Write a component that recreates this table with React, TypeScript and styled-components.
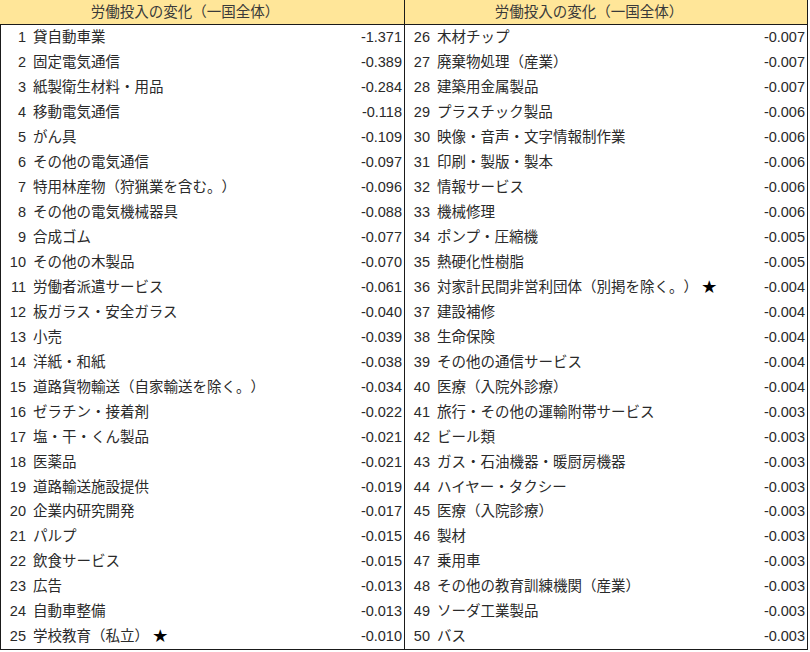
import React from "react";
import styled, { createGlobalStyle } from "styled-components";

const GlobalStyle = createGlobalStyle`
  html, body { margin: 0; padding: 0; background: #ffffff; }
  body {
    font-family: "Liberation Sans", "Noto Sans CJK JP", sans-serif;
    color: #2a2a2a;
    text-spacing-trim: space-all;
  }
`;

type Item = { no: number; name: string; star?: boolean; value: string };

const left: Item[] = [
  { no: 1, name: "貸自動車業", value: "-1.371" },
  { no: 2, name: "固定電気通信", value: "-0.389" },
  { no: 3, name: "紙製衛生材料・用品", value: "-0.284" },
  { no: 4, name: "移動電気通信", value: "-0.118" },
  { no: 5, name: "がん具", value: "-0.109" },
  { no: 6, name: "その他の電気通信", value: "-0.097" },
  { no: 7, name: "特用林産物（狩猟業を含む。）", value: "-0.096" },
  { no: 8, name: "その他の電気機械器具", value: "-0.088" },
  { no: 9, name: "合成ゴム", value: "-0.077" },
  { no: 10, name: "その他の木製品", value: "-0.070" },
  { no: 11, name: "労働者派遣サービス", value: "-0.061" },
  { no: 12, name: "板ガラス・安全ガラス", value: "-0.040" },
  { no: 13, name: "小売", value: "-0.039" },
  { no: 14, name: "洋紙・和紙", value: "-0.038" },
  { no: 15, name: "道路貨物輸送（自家輸送を除く。）", value: "-0.034" },
  { no: 16, name: "ゼラチン・接着剤", value: "-0.022" },
  { no: 17, name: "塩・干・くん製品", value: "-0.021" },
  { no: 18, name: "医薬品", value: "-0.021" },
  { no: 19, name: "道路輸送施設提供", value: "-0.019" },
  { no: 20, name: "企業内研究開発", value: "-0.017" },
  { no: 21, name: "パルプ", value: "-0.015" },
  { no: 22, name: "飲食サービス", value: "-0.015" },
  { no: 23, name: "広告", value: "-0.013" },
  { no: 24, name: "自動車整備", value: "-0.013" },
  { no: 25, name: "学校教育（私立）", star: true, value: "-0.010" },
];

const right: Item[] = [
  { no: 26, name: "木材チップ", value: "-0.007" },
  { no: 27, name: "廃棄物処理（産業）", value: "-0.007" },
  { no: 28, name: "建築用金属製品", value: "-0.007" },
  { no: 29, name: "プラスチック製品", value: "-0.006" },
  { no: 30, name: "映像・音声・文字情報制作業", value: "-0.006" },
  { no: 31, name: "印刷・製版・製本", value: "-0.006" },
  { no: 32, name: "情報サービス", value: "-0.006" },
  { no: 33, name: "機械修理", value: "-0.006" },
  { no: 34, name: "ポンプ・圧縮機", value: "-0.005" },
  { no: 35, name: "熱硬化性樹脂", value: "-0.005" },
  { no: 36, name: "対家計民間非営利団体（別掲を除く。）", star: true, value: "-0.004" },
  { no: 37, name: "建設補修", value: "-0.004" },
  { no: 38, name: "生命保険", value: "-0.004" },
  { no: 39, name: "その他の通信サービス", value: "-0.004" },
  { no: 40, name: "医療（入院外診療）", value: "-0.004" },
  { no: 41, name: "旅行・その他の運輸附帯サービス", value: "-0.003" },
  { no: 42, name: "ビール類", value: "-0.003" },
  { no: 43, name: "ガス・石油機器・暖厨房機器", value: "-0.003" },
  { no: 44, name: "ハイヤー・タクシー", value: "-0.003" },
  { no: 45, name: "医療（入院診療）", value: "-0.003" },
  { no: 46, name: "製材", value: "-0.003" },
  { no: 47, name: "乗用車", value: "-0.003" },
  { no: 48, name: "その他の教育訓練機関（産業）", value: "-0.003" },
  { no: 49, name: "ソーダ工業製品", value: "-0.003" },
  { no: 50, name: "バス", value: "-0.003" },
];

const Sheet = styled.div`
  display: flex;
  width: 808px;
  font-size: 14.5px;
`;

const Panel = styled.section<{ $first?: boolean }>`
  display: flex;
  flex-direction: column;
  width: ${(p) => (p.$first ? "405px" : "403px")};
  border-right: 1px solid #1a1a1a;
  box-sizing: border-box;
`;

const Header = styled.div`
  height: 24px;
  background: #ffe699;
  border-bottom: 1px solid #1a1a1a;
  display: flex;
  align-items: center;
  justify-content: center;
  padding-right: 34px;
  color: #3a3a3a;
  line-height: 1;
`;

const Body = styled.div<{ $first?: boolean }>`
  display: grid;
  grid-template-rows: repeat(25, 1fr);
  height: 624px;
  border-bottom: 1px solid #1a1a1a;
  border-left: ${(p) => (p.$first ? "1px solid #1a1a1a" : "none")};
`;

const Row = styled.div`
  display: flex;
  align-items: center;
  padding-right: 2px;
  white-space: nowrap;
  line-height: 1;
`;

const No = styled.span`
  width: 25px;
  text-align: right;
  margin-right: 7px;
  flex: none;
`;

const Name = styled.span`
  flex: 1;
`;

const Star = styled.span`
  margin-left: 4px;
  color: #000;
`;

const Value = styled.span`
  flex: none;
  text-align: right;
`;

function TablePanel({ items, first }: { items: Item[]; first?: boolean }) {
  return (
    <Panel $first={first}>
      <Header>労働投入の変化（一国全体）</Header>
      <Body $first={first}>
        {items.map((it) => (
          <Row key={it.no}>
            <No>{it.no}</No>
            <Name>
              {it.name}
              {it.star && <Star>★</Star>}
            </Name>
            <Value>{it.value}</Value>
          </Row>
        ))}
      </Body>
    </Panel>
  );
}

export default function App() {
  return (
    <>
      <GlobalStyle />
      <Sheet>
        <TablePanel items={left} first />
        <TablePanel items={right} />
      </Sheet>
    </>
  );
}
